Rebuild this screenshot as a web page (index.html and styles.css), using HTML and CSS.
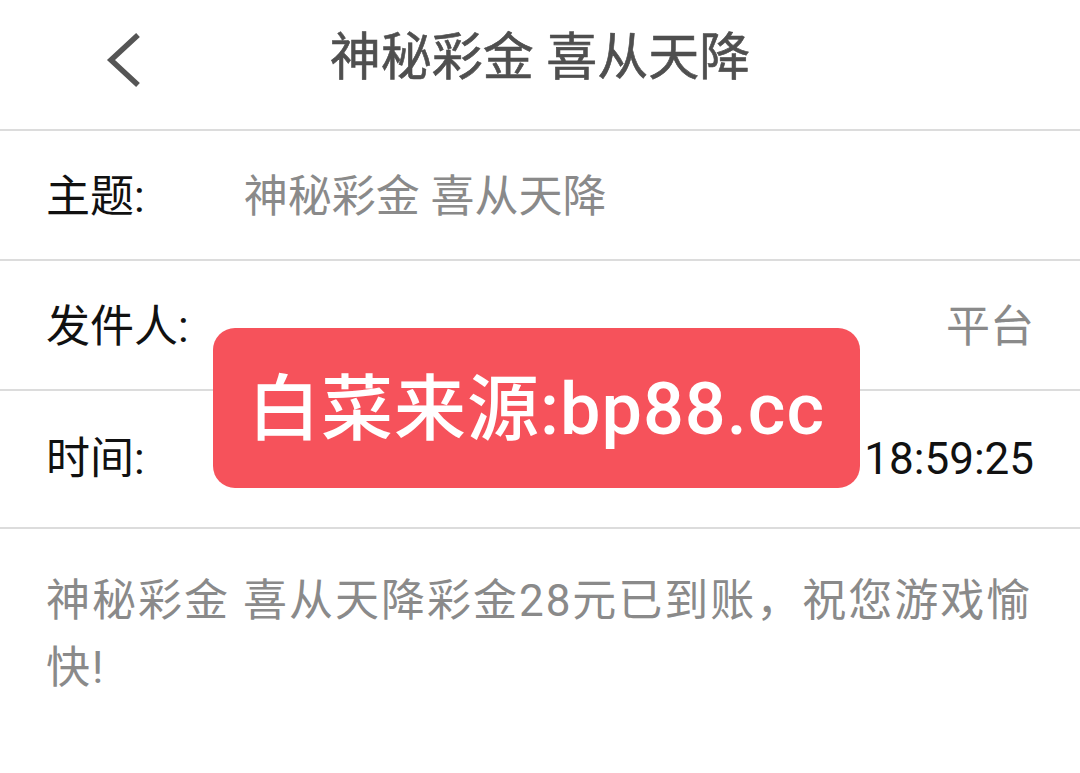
FILE: index.html
```html
<!DOCTYPE html>
<html lang="zh-CN">
<head>
  <meta charset="UTF-8" />
  <meta name="viewport" content="width=device-width, initial-scale=1.0"/>
  <title>神秘彩金 喜从天降</title>
  <link rel="stylesheet" href="styles.css">
</head>
<body>
  <header class="topbar">
    <a class="back" href="#">
      <svg width="40" height="56" viewBox="0 0 40 56">
        <polyline points="34,3 7,28 34,53" fill="none" stroke="#555" stroke-width="5.5" stroke-linejoin="miter"/>
      </svg>
    </a>
    <h1>神秘彩金 喜从天降</h1>
    <span></span>
  </header>

  <ul class="fields">
    <li class="field field-left">
      <span class="label">主题:</span>
      <span class="value">神秘彩金 喜从天降</span>
    </li>
    <li class="field">
      <span class="label">发件人:</span>
      <span class="value">平台</span>
    </li>
    <li class="field field-tall">
      <span class="label">时间:</span>
      <span class="value value-dark">18:59:25</span>
    </li>
  </ul>

  <p class="message">神秘彩金 喜从天降彩金28元已到账，祝您游戏愉快!</p>

  <div class="watermark">白菜来源:bp88.cc</div>
</body>
</html>
```

FILE: styles.css
```css
:root {
  --line: #dcdcdc;
  --muted: #8a8a8a;
  --dark: #111;
  --title: #4f4f4f;
  --badge: #f6525b;
}

* {
  box-sizing: border-box;
  margin: 0;
  padding: 0;
}

body {
  font-family: Roboto, "Noto Sans CJK SC", sans-serif;
  background: #fff;
  color: var(--dark);
  width: 1080px;
  height: 773px;
  overflow: hidden;
  position: relative;
}

.topbar {
  height: 131px;
  display: grid;
  grid-template-columns: 1fr auto 1fr;
  align-items: center;
  border-bottom: 2px solid var(--line);
}

.back {
  display: flex;
  padding-left: 104px;
  margin-top: -10px;
}

.topbar h1 {
  font-size: 51px;
  font-weight: 400;
  color: var(--title);
  line-height: 1;
  margin-top: -14px;
  -webkit-text-stroke: 0.6px var(--title);
}

.fields {
  list-style: none;
}

.field {
  height: 130px;
  padding: 4px 46px 0;
  display: flex;
  justify-content: space-between;
  align-items: center;
  border-bottom: 2px solid var(--line);
  font-size: 44px;
  line-height: 1;
}

.field-left {
  justify-content: flex-start;
  gap: 99px;
}

.field-tall {
  height: 138px;
  padding-top: 0;
}

.label {
  color: var(--dark);
}

.value {
  color: var(--muted);
}

.value-dark {
  color: var(--dark);
}

.message {
  padding: 39px 46px 0;
  font-size: 44px;
  line-height: 67px;
  letter-spacing: 2px;
  color: var(--muted);
}

.watermark {
  position: absolute;
  left: 213px;
  top: 328px;
  width: 647px;
  height: 160px;
  border-radius: 22px;
  background: var(--badge);
  color: #fff;
  font-size: 72px;
  font-weight: 500;
  letter-spacing: 1px;
  display: flex;
  align-items: center;
  justify-content: center;
  padding-bottom: 12px;
}
```
